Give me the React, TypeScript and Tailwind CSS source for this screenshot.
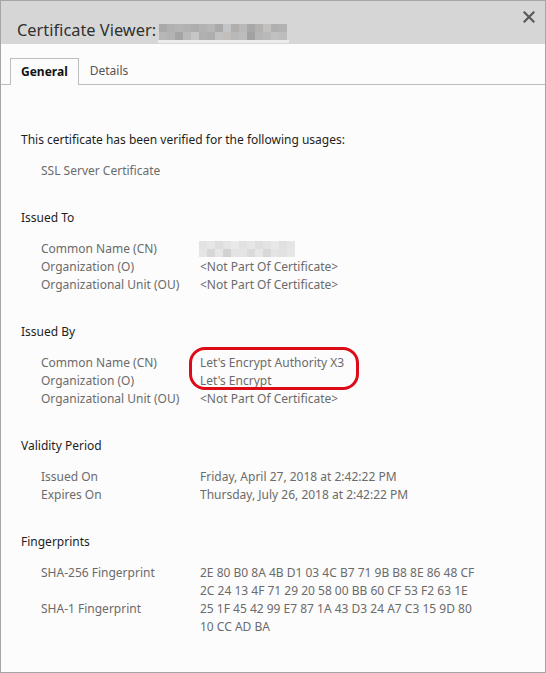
import React from "react";

// pixelated stand-ins for the redacted host name
const titleBlur = [
  ["#a9a9a9", "#b0b0b0", "#b4b4b4", "#b2b2b2", "#adadad", "#b3b3b3", "#b6b6b6", "#aaaaaa", "#c3c5c6", "#b1afae", "#b9b9b9", "#a8a8a8", "#b4b2b0", "#c3c0bd", "#aeb0b2", "#b3b3b3"],
  ["#b6b6b6", "#b3b3b3", "#a4a4a4", "#b9b9b9", "#c6c6c6", "#b0b0b0", "#aeaeae", "#c0c2c2", "#c2bebc", "#b8b8b8", "#bcbcbc", "#a2a0a0", "#b5b5b5", "#b9b9b9", "#c0c0c0", "#bdbdbd"],
];

const cnBlur = [
  ["#e2e2e2", "#e6e6e6", "#dedede", "#e4e4e4", "#e9e9e9", "#e1e1e1", "#e6e6e6", "#dfdfdf", "#e3e3e3", "#e8e8e8", "#e0e0e0", "#e5e5e5"],
  ["#e5e5e5", "#d7d7d7", "#e6e6e6", "#d2d2d2", "#e3e3e3", "#e4e4e4", "#dadada", "#e6e6e6", "#d8d8d8", "#e4e4e4", "#e2e2e2", "#e7e7e7"],
];

function Blur({ rows, cell }: { rows: string[][]; cell: string }) {
  return (
    <div className="flex flex-col">
      {rows.map((r, i) => (
        <div key={i} className="flex">
          {r.map((c, j) => (
            <div key={j} className={cell} style={{ background: c }} />
          ))}
        </div>
      ))}
    </div>
  );
}

type Row = { label: string; value: React.ReactNode };

function Section({ title, rows }: { title: string; rows: Row[] }) {
  return (
    <div className="mt-[29px]">
      <div className="text-[#1e1e1e] leading-[18px]">{title}</div>
      <div className="mt-[13px] pl-[20px] grid grid-cols-[159px_1fr]">
        {rows.map((r, i) => (
          <React.Fragment key={i}>
            <div className="text-[#6b6b6b] leading-[18px]">{r.label}</div>
            <div className="text-[#6b6b6b] leading-[18px]">{r.value}</div>
          </React.Fragment>
        ))}
      </div>
    </div>
  );
}

export default function App() {
  const notPart = "<Not Part Of Certificate>";
  return (
    <div
      className="w-[546px] h-[673px] border border-[#a6a6a6] bg-[#fcfcfc] flex flex-col text-[12px]"
      style={{ fontFamily: '"Noto Sans", "Open Sans", sans-serif' }}
    >
      {/* Title bar */}
      <div className="h-[43px] bg-[#d6d6d6] flex items-start justify-between pl-[16px] pr-[10px] shrink-0">
        <div className="flex items-start pt-[17px]">
          <span className="text-[16.4px] leading-[24px] text-[#303030]">Certificate Viewer:</span>
          <div className="ml-[3px] mt-[6px] flex flex-col">
            <Blur rows={titleBlur} cell="w-[8px] h-[8px]" />
            <div className="h-[3px] w-[131px] -ml-[1px] bg-[#ececec]" />
          </div>
        </div>
        <svg width="12" height="12" viewBox="0 0 12 12" className="mt-[10px]">
          <path d="M1.5 1.5 L10.5 10.5 M10.5 1.5 L1.5 10.5" stroke="#5a5a5a" strokeWidth="2.2" strokeLinecap="square" />
        </svg>
      </div>

      {/* Tabs */}
      <div className="mt-[14px] flex items-end border-b border-[#bdbdbd] pl-[9px] h-[27px] shrink-0">
        <div className="h-[27px] -mb-px px-[10px] border border-b-0 border-[#bdbdbd] bg-[#fcfcfc] flex items-center font-bold text-[#111] text-[12px]">
          General
        </div>
        <div className="h-[26px] px-[11px] flex items-center text-[#555] text-[12px]">Details</div>
      </div>

      {/* Body */}
      <div className="relative px-[20px] pt-[46px]">
        <div className="text-[#1e1e1e] leading-[18px]">This certificate has been verified for the following usages:</div>
        <div className="mt-[13px] pl-[20px] text-[#6b6b6b] leading-[18px]">SSL Server Certificate</div>

        <Section
          title="Issued To"
          rows={[
            {
              label: "Common Name (CN)",
              value: (
                <div className="pt-[1px] -ml-[1px]">
                  <Blur rows={cnBlur} cell="w-[8px] h-[8px]" />
                </div>
              ),
            },
            { label: "Organization (O)", value: notPart },
            { label: "Organizational Unit (OU)", value: notPart },
          ]}
        />

        <Section
          title="Issued By"
          rows={[
            { label: "Common Name (CN)", value: "Let's Encrypt Authority X3" },
            { label: "Organization (O)", value: "Let's Encrypt" },
            { label: "Organizational Unit (OU)", value: notPart },
          ]}
        />

        <Section
          title="Validity Period"
          rows={[
            { label: "Issued On", value: "Friday, April 27, 2018 at 2:42:22 PM" },
            { label: "Expires On", value: "Thursday, July 26, 2018 at 2:42:22 PM" },
          ]}
        />

        <Section
          title="Fingerprints"
          rows={[
            {
              label: "SHA-256 Fingerprint",
              value: (
                <>
                  <div>2E 80 B0 8A 4B D1 03 4C B7 71 9B B8 8E 86 48 CF</div>
                  <div>2C 24 13 4F 71 29 20 58 00 BB 60 CF 53 F2 63 1E</div>
                </>
              ),
            },
            {
              label: "SHA-1 Fingerprint",
              value: (
                <>
                  <div>25 1F 45 42 99 E7 87 1A 43 D3 24 A7 C3 15 9D 80</div>
                  <div>10 CC AD BA</div>
                </>
              ),
            },
          ]}
        />

        {/* red annotation around the issuer */}
        <div className="absolute left-[188px] top-[262px] w-[170px] h-[43px] border-[3px] border-[#dd0a17] rounded-[16px] pointer-events-none" />
      </div>
    </div>
  );
}
